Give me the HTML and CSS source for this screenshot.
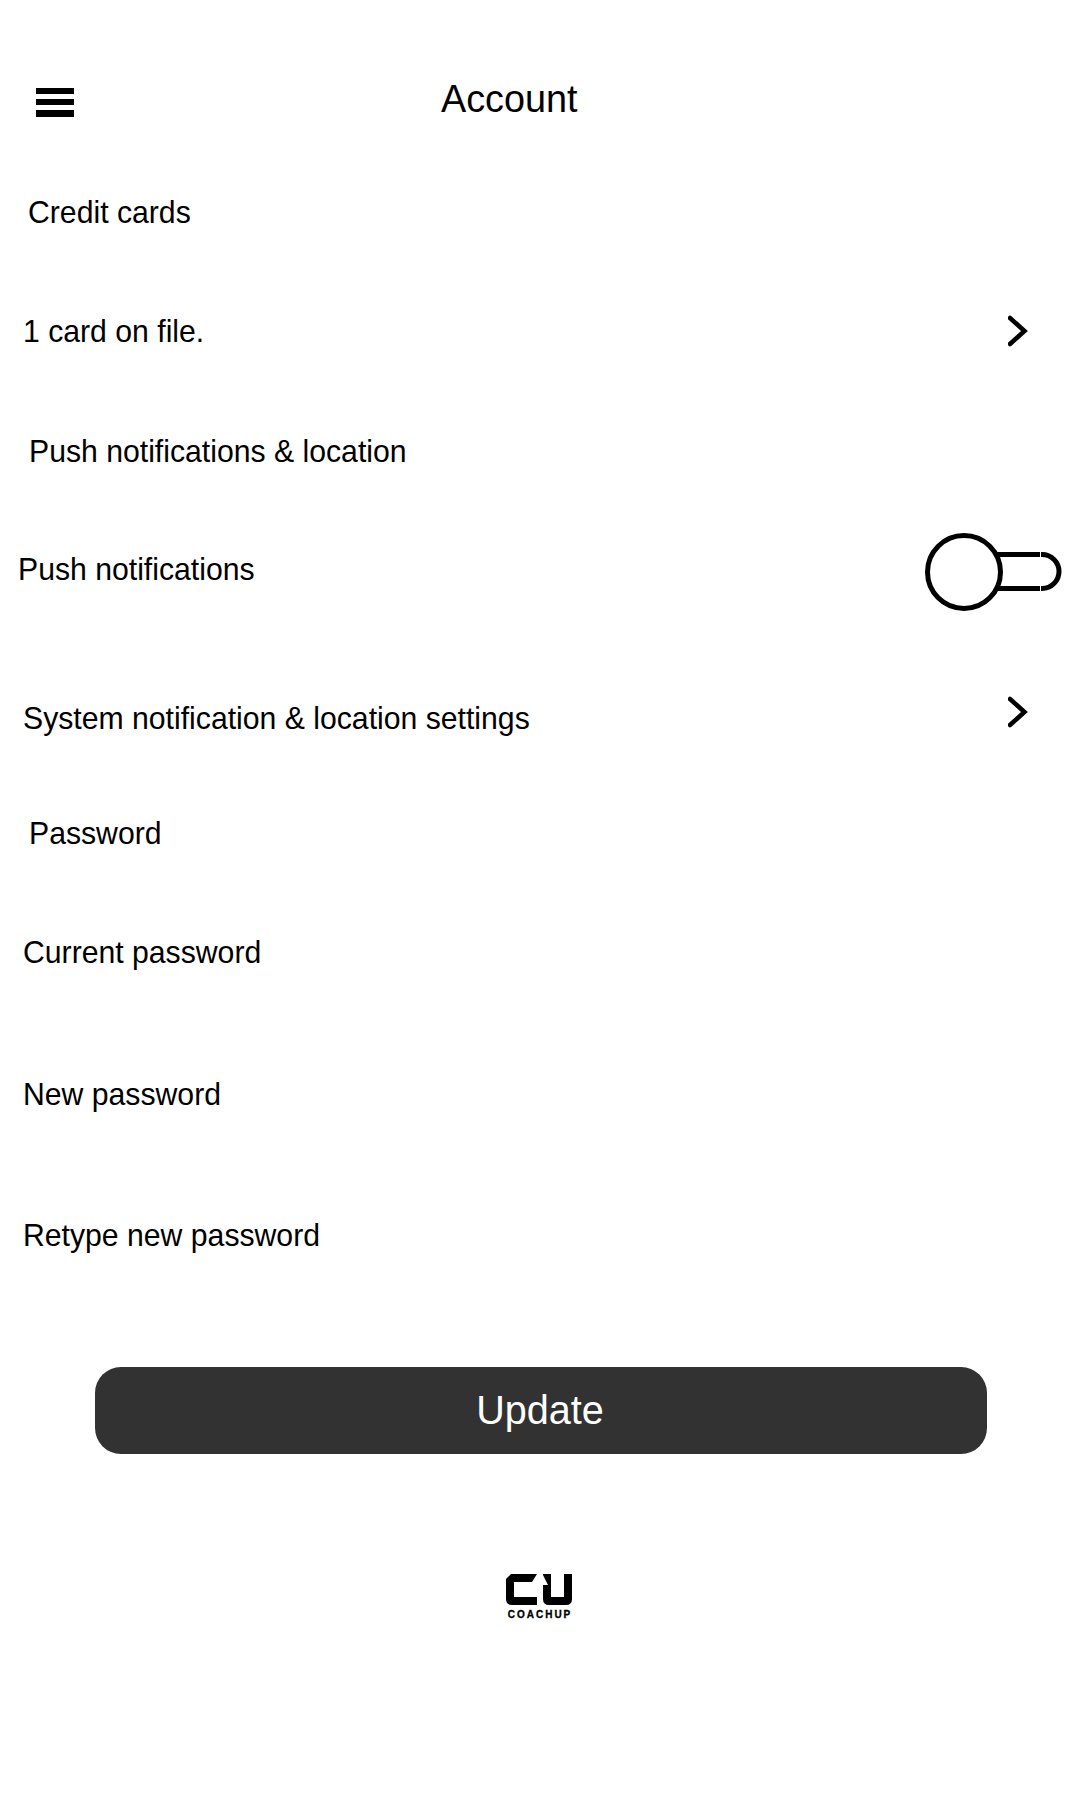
FILE: index.html
```html
<!DOCTYPE html>
<html lang="en">
<head>
<meta charset="utf-8">
<title>Account</title>
<link rel="stylesheet" href="styles.css">
</head>
<body>
<header class="topbar">
  <svg class="menu" width="38" height="29" viewBox="0 0 38 29" shape-rendering="crispEdges"><path d="M0 0h38v6H0zM0 11h38v6H0zM0 22h38v7H0z"/></svg>
  <h1 class="title">Account</h1>
</header>
<main class="settings">
  <h2 class="row heading credit"><span class="label">Credit cards</span></h2>
  <div class="row cards"><span class="label">1 card on file.</span>
    <svg class="chevron" width="20" height="32" viewBox="0 0 20 32"><path d="M2 3l14.500 13L2 29"/></svg>
  </div>
  <h2 class="row heading push-heading"><span class="label">Push notifications &amp; location</span></h2>
  <div class="row push"><span class="label">Push notifications</span>
    <svg class="toggle" width="138" height="78" viewBox="0 0 138 78"><path d="M70 21.500H115M70 55.500H115M116 21.500h1a17 17 0 0 1 0 34H116"/><circle cx="39" cy="39" r="36.500"/></svg>
  </div>
  <div class="row system"><span class="label">System notification &amp; location settings</span>
    <svg class="chevron" width="20" height="32" viewBox="0 0 20 32"><path d="M2 3l14.500 13L2 29"/></svg>
  </div>
  <h2 class="row heading password"><span class="label">Password</span></h2>
  <label class="row current"><span class="label">Current password</span></label>
  <label class="row new"><span class="label">New password</span></label>
  <label class="row retype"><span class="label">Retype new password</span></label>
</main>
<button class="update"><span class="label">Update</span></button>
<footer class="brand">
  <svg width="66" height="31" viewBox="0 0 66 31"><path d="M5 0H31L26 8H8V23H31V31H6Q0 31 0 25V5zM37 0H45V23H58V0H66V25Q66 31 60 31H43Q37 31 37 25V11H42L37 1z"/></svg>
  <span class="wordmark">COACHUP</span>
</footer>
</body>
</html>
```
FILE: styles.css
```css
* { box-sizing: border-box; }
body {
  margin: 0;
  height: 1800px;
  background: #fff;
  color: #000;
  font-family: "Liberation Sans", Arial, sans-serif;
  font-size: 30.2px;
  line-height: 40px;
}
.topbar { display: flex; height: 193px; padding: 74px 0 0 36px; }
.menu { margin-top: 14px; }
.title { height: 50px; margin: 0 0 0 367px; font-size: 37.8px; font-weight: 400; line-height: 50px; transform: scaleY(1.02); transform-origin: 0 38px; }
.settings { display: flex; flex-direction: column; height: 1174px; }
.row { display: flex; justify-content: space-between; height: 40px; margin: 0; padding-left: 23px; font-size: inherit; font-weight: 400; white-space: nowrap; }
.label { height: 40px; transform: scaleY(1.03); transform-origin: 0 30px; }
.heading { padding-left: 29px; }
.credit { padding-left: 28px; }
.chevron { flex: none; margin: 3px 52px 0 0; fill: none; stroke: #000; stroke-width: 4.5; stroke-linecap: round; }
.cards { margin-top: 79px; }
.push-heading { margin-top: 80px; }
.push { height: 78px; margin-top: 61px; padding-left: 18px; }
.push .label { margin-top: 17px; }
.toggle { margin-right: 17px; fill: #fff; stroke: #000; stroke-width: 5; }
.system { margin-top: 88px; }
.system .chevron { margin-top: -3px; }
.password { margin-top: 75px; }
.current { margin-top: 79px; }
.new { margin-top: 102px; }
.retype { margin-top: 101px; }
.update {
  display: block;
  width: 892px;
  height: 87px;
  margin: 0 0 0 95px;
  padding: 0 2px 2px 0;
  border: 0;
  border-radius: 26px;
  background: #323232;
  color: #fff;
  font: 39.6px "Liberation Sans", Arial, sans-serif;
}
.update .label { display: block; height: 46px; line-height: 46px; transform-origin: 0 37px; }
.brand { display: flex; flex-direction: column; align-items: center; width: 66px; margin: 120px 0 0 506px; }
.wordmark { margin: 5px 0 0 2px; font-size: 10px; font-weight: 700; line-height: 10px; letter-spacing: 2px; -webkit-text-stroke: 0.3px #000; }
```
